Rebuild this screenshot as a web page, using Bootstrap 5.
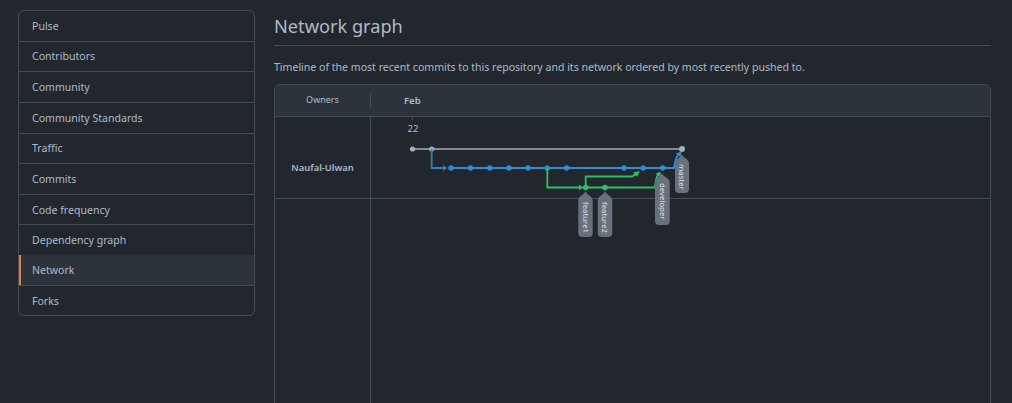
<!DOCTYPE html>
<html lang="en">

<head>
    <meta charset="UTF-8" />
    <meta name="viewport" content="width=device-width, initial-scale=1" />
    <title>Network graph</title>
    <link href="https://cdn.jsdelivr.net/npm/bootstrap@5.3.3/dist/css/bootstrap.min.css" rel="stylesheet" />
    <style>
        html, body {
            height: 403px;
            overflow: hidden;
        }

        body {
            background: #22272e;
            color: #adbac7;
            font-family: "Noto Sans", "Liberation Sans", sans-serif;
            font-size: 10.6px;
            padding: 10px 21px 0 18px;
        }

        .page-wrap {
            column-gap: 19px;
        }

        .side-menu {
            width: 237px;
            flex: none;
            align-self: flex-start;
            border: 1px solid #444c56;
            border-radius: 6px;
            overflow: hidden;
            --bs-list-group-bg: transparent;
            --bs-list-group-border-width: 0;
        }

        .side-menu .list-group-item {
            color: #adbac7;
            background: transparent;
            font-size: 10.55px;
            line-height: 18px;
            padding: 5.8px 13px 5.85px;
            border-top: 1px solid #444c56;
        }

        .side-menu .list-group-item:first-child {
            border-top: 0;
        }

        .side-menu .list-group-item.active {
            background: #2d333b;
            box-shadow: inset 2px 0 0 #ec775c;
        }

        .page-title {
            font-size: 18.2px;
            font-weight: 400;
            line-height: 26px;
            color: #adbac7;
            margin: 3px 0 0;
            padding-bottom: 6px;
            border-bottom: 1px solid #444c56;
        }

        .page-desc {
            font-size: 10.56px;
            line-height: 18px;
            margin: 12px 0 8px;
            height: 18px;
        }

        .graph-box {
            border: 1px solid #444c56;
            border-radius: 6px;
            height: 340px;
            overflow: hidden;
        }

        .graph-head {
            height: 32px;
            background: #2d333b;
            border-bottom: 1px solid #444c56;
        }

        .owner-head {
            width: 96px;
            height: 15px;
            line-height: 13px;
            font-size: 9px;
            text-align: center;
            border-right: 1px solid #444c56;
        }

        .month-head {
            padding: 2px 0 0 33px;
            font-size: 9.5px;
            font-weight: 600;
        }

        .graph-body {
            height: 100%;
        }

        .owner-col {
            width: 96px;
            flex: none;
            border-right: 1px solid #444c56;
        }

        .owner-row {
            height: 82px;
            border-bottom: 1px solid #444c56;
            font-size: 9.4px;
            font-weight: 600;
            padding-top: 44px;
            line-height: 14px;
            text-align: center;
        }

        .canvas-col {
            position: relative;
        }

        .canvas-row {
            height: 82px;
            border-bottom: 1px solid #444c56;
        }

        .graph-svg {
            position: absolute;
            left: 0;
            top: 0;
            width: 619px;
            height: 220px;
            overflow: visible;
        }

        .day-text {
            font-family: "Noto Sans", "Liberation Sans", sans-serif;
            font-size: 9.5px;
            fill: #adbac7;
            text-anchor: middle;
        }

        .ref-text {
            font-family: "Noto Sans", "Liberation Sans", sans-serif;
            font-size: 7.8px;
            fill: #dfe3e8;
        }
    </style>
</head>

<body>
    <div class="d-flex page-wrap">
        <div class="list-group side-menu">
            <a class="list-group-item" href="#">Pulse</a>
            <a class="list-group-item" href="#">Contributors</a>
            <a class="list-group-item" href="#">Community</a>
            <a class="list-group-item" href="#">Community Standards</a>
            <a class="list-group-item" href="#">Traffic</a>
            <a class="list-group-item" href="#">Commits</a>
            <a class="list-group-item" href="#">Code frequency</a>
            <a class="list-group-item" href="#">Dependency graph</a>
            <a class="list-group-item active" href="#">Network</a>
            <a class="list-group-item" href="#">Forks</a>
        </div>

        <div class="flex-grow-1">
            <h2 class="page-title">Network graph</h2>
            <p class="page-desc">Timeline of the most recent commits to this repository and its network ordered by most recently pushed to.</p>

            <div class="graph-box">
                <div class="graph-head d-flex align-items-center">
                    <div class="owner-head">Owners</div>
                    <div class="month-head">Feb</div>
                </div>
                <div class="graph-body d-flex">
                    <div class="owner-col">
                        <div class="owner-row">Naufal-Ulwan</div>
                    </div>
                    <div class="canvas-col flex-grow-1">
                        <div class="canvas-row"></div>
                        <!-- viewBox uses page coordinates so points can be read off the graph -->
                        <svg class="graph-svg" viewBox="371 117 619 220">
                            <line x1="412.5" y1="117" x2="412.5" y2="120" stroke="#444c56" />
                            <text class="day-text" x="413" y="131.5">22</text>

                            <!-- master -->
                            <path d="M412.5 149H682" fill="none" stroke="#a7aeb5" stroke-width="1.7" />
                            <circle cx="412.5" cy="149" r="2.6" fill="#a7aeb5" />
                            <circle cx="431.7" cy="149" r="2.6" fill="#a7aeb5" />
                            <circle cx="682" cy="149" r="3" fill="#a7aeb5" />

                            <!-- developer -->
                            <path d="M431.7 149V168H444" fill="none" stroke="#2f80bd" stroke-width="1.8" />
                            <path d="M443 165.2L447.5 168L443 170.8Z" fill="#2f80bd" />
                            <path d="M451 168H674C675.5 160 676 157 679 154" fill="none" stroke="#2f8ed6" stroke-width="1.8" />
                            <path d="M675.8 153.5L681.5 151.5L680.5 157Z" fill="#2f8ed6" />
                            <g fill="#2f8ed6">
                                <circle cx="451" cy="168" r="2.7" />
                                <circle cx="470.5" cy="168" r="2.7" />
                                <circle cx="489.8" cy="168" r="2.7" />
                                <circle cx="509" cy="168" r="2.7" />
                                <circle cx="528" cy="168" r="2.7" />
                                <circle cx="547.3" cy="168" r="2.7" />
                                <circle cx="566.7" cy="168" r="2.7" />
                                <circle cx="624" cy="168" r="2.7" />
                                <circle cx="643.3" cy="168" r="2.7" />
                                <circle cx="662.7" cy="168" r="2.7" />
                            </g>

                            <!-- feature branches -->
                            <path d="M547.3 168V187.5H580" fill="none" stroke="#2cc066" stroke-width="1.8" />
                            <path d="M579 184.7L583.5 187.5L579 190.3Z" fill="#2cc066" />
                            <path d="M585.7 187.5V176.5H632L636 174" fill="none" stroke="#2cc066" stroke-width="1.8" />
                            <path d="M633 172.5L640 171L637 177Z" fill="#2cc066" />
                            <path d="M586 187.5H655C655.5 181 656 178 658 175" fill="none" stroke="#2cc066" stroke-width="1.8" />
                            <path d="M655.5 174L660.5 171.5L660.5 177.5Z" fill="#2cc066" />
                            <circle cx="585.7" cy="187.5" r="2.8" fill="#2cc066" />
                            <circle cx="605" cy="187.5" r="2.8" fill="#2cc066" />

                            <!-- ref labels -->
                            <g fill="#68717b">
                                <path d="M585.5 191C586.5 195 592.7 196 592.7 200V233a4 4 0 0 1-4 4H582.3a4 4 0 0 1-4-4V200C578.3 196 584.5 195 585.5 191Z" />
                                <path d="M605 191C606 195 612.2 196 612.2 200V233a4 4 0 0 1-4 4H601.8a4 4 0 0 1-4-4V200C597.8 196 604 195 605 191Z" />
                                <path d="M662 173C663 177 669.7 178 669.7 182V221a4 4 0 0 1-4 4H659a4 4 0 0 1-4-4V182C655 178 661 177 662 173Z" />
                                <path d="M681.8 154C682.8 158 689 159 689 163V189a4 4 0 0 1-4 4H679a4 4 0 0 1-4-4V163C675 159 680.8 158 681.8 154Z" />
                            </g>
                            <text class="ref-text" transform="translate(582.7 202) rotate(90)">feature1</text>
                            <text class="ref-text" transform="translate(602.2 202) rotate(90)">feature2</text>
                            <text class="ref-text" transform="translate(659.7 183) rotate(90)">developer</text>
                            <text class="ref-text" transform="translate(679.2 164) rotate(90)">master</text>
                        </svg>
                    </div>
                </div>
            </div>
        </div>
    </div>

    <script src="https://cdn.jsdelivr.net/npm/bootstrap@5.3.3/dist/js/bootstrap.bundle.min.js"></script>
</body>

</html>
